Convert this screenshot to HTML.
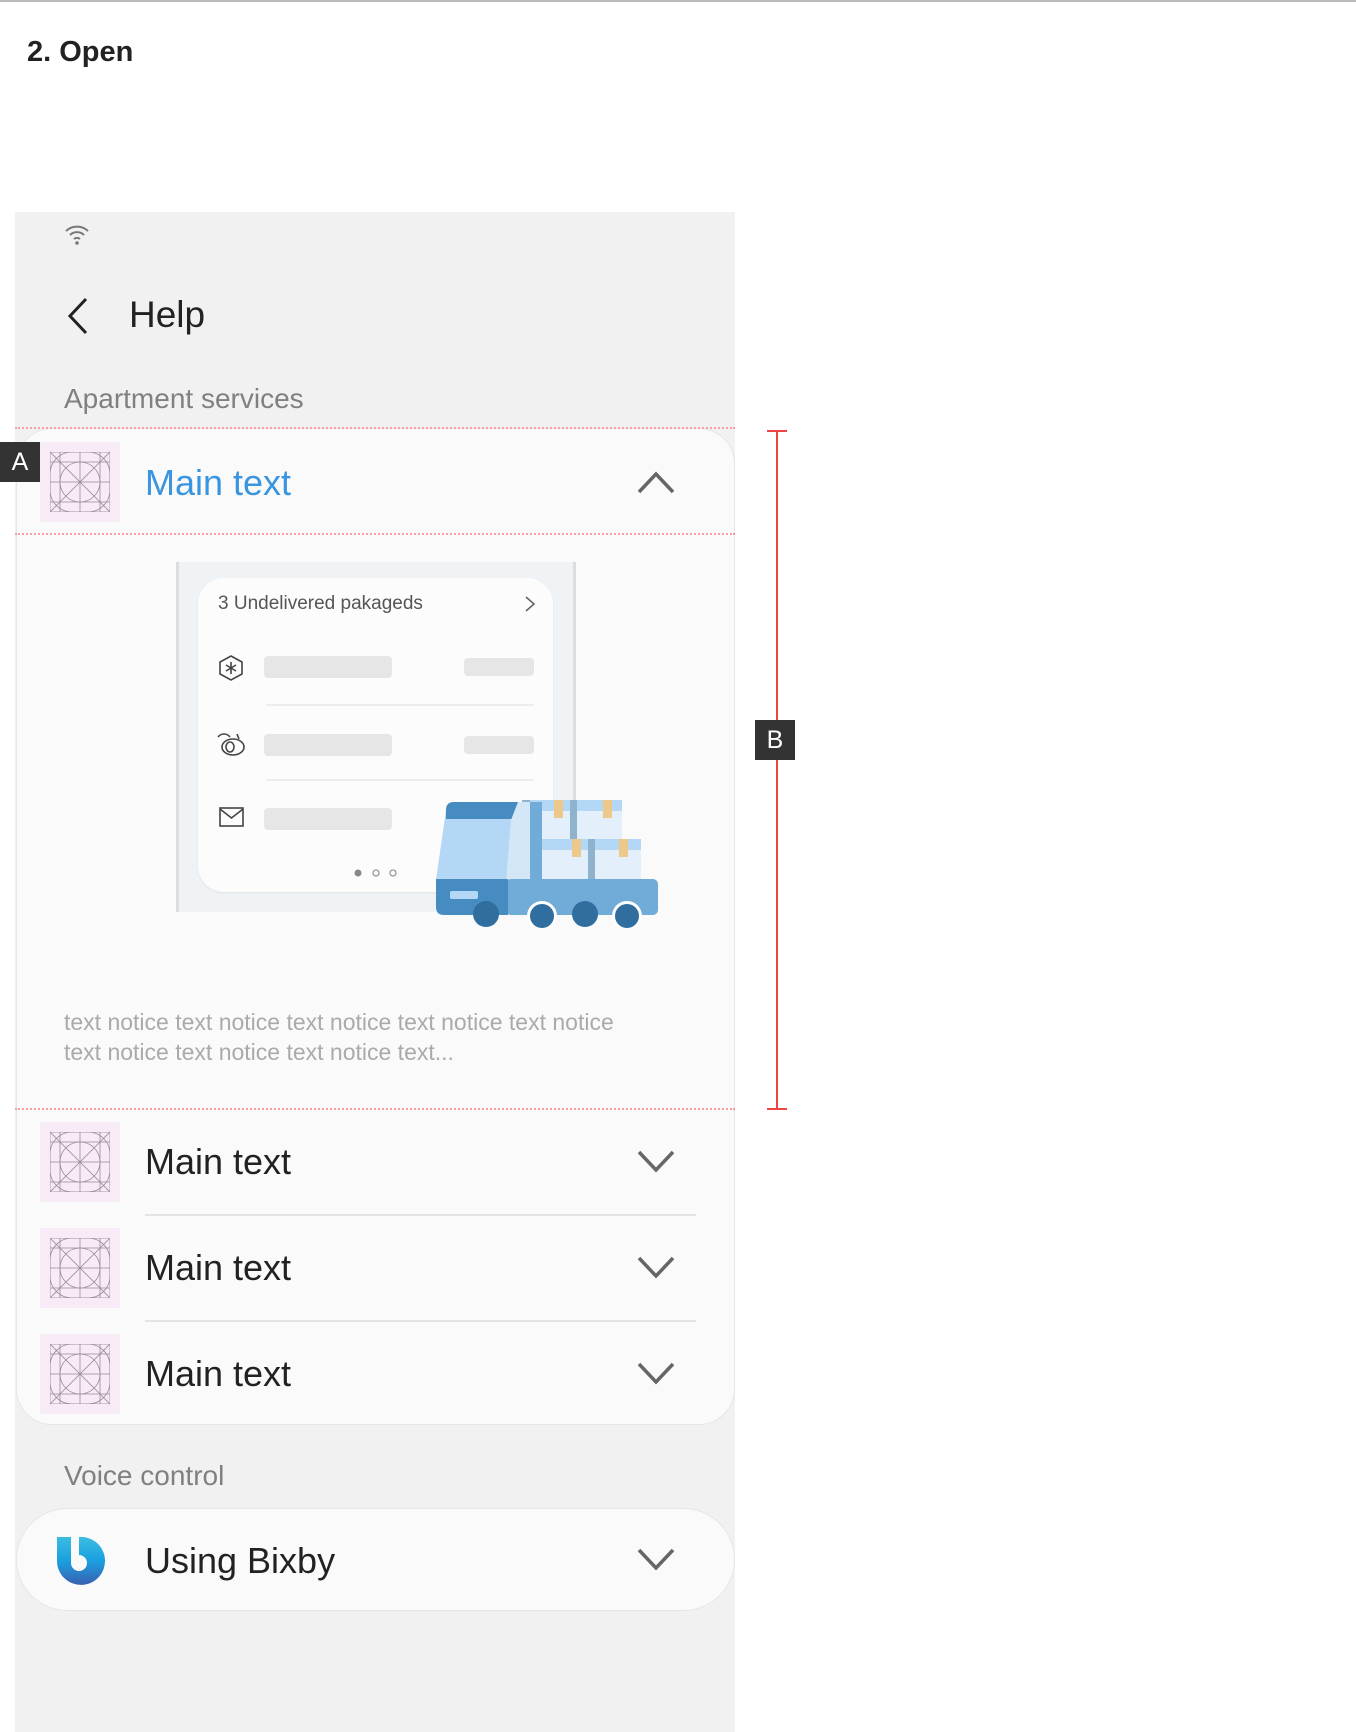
<!DOCTYPE html>
<html><head><meta charset="utf-8"><style>
*{margin:0;padding:0;box-sizing:border-box}
body{width:1356px;height:1732px;background:#fff;position:relative;overflow:hidden;font-family:"Liberation Sans",sans-serif}
.a{position:absolute}
.dot{position:absolute;left:15px;width:720px;border-top:2px dotted #f3a0a0}
.ic{position:absolute;left:40px;width:80px;height:80px;background:#f8ebf8}
.mt{position:absolute;left:145px;font-size:36px;color:#222}
.sep{position:absolute;left:145px;width:551px;height:2px;background:#e4e4e4}
.bar{position:absolute;background:#e6e6e6;border-radius:4px}
</style></head><body>
<div class="a" style="left:0;top:0;width:1356px;height:2px;background:#bbb"></div>
<div class="a" style="left:27px;top:36px;font-size:29px;color:#222;font-weight:bold">2. Open</div>
<div class="a" style="left:15px;top:212px;width:720px;height:1520px;background:#f1f1f1"></div>
<svg class="a" style="left:64px;top:224px" width="26" height="22" viewBox="0 0 26 22"><g fill="none" stroke="#777" stroke-width="2"><path d="M2 7a16 16 0 0 1 22 0"/><path d="M6 11a10 10 0 0 1 14 0"/><path d="M10 15a4.5 4.5 0 0 1 6 0"/></g><circle cx="13" cy="19" r="1.8" fill="#777"/></svg>
<svg class="a" style="left:64px;top:296px" width="28" height="40"><path d="M22 3L6 20l16 17" fill="none" stroke="#222" stroke-width="3"/></svg>
<div class="a" style="left:129px;top:294px;font-size:37px;color:#222">Help</div>
<div class="a" style="left:64px;top:383px;font-size:28px;color:#808080">Apartment services</div>

<div class="a" style="left:16px;top:428px;width:719px;height:997px;background:#fafafa;border:1px solid #e6e6e6;border-radius:36px"></div>
<div class="dot" style="top:427px"></div>
<div class="dot" style="top:533px"></div>
<div class="dot" style="top:1108px"></div>

<svg width="0" height="0" style="position:absolute"><defs><symbol id="g" viewBox="0 0 60 60"><g fill="none" stroke="#9a8a9c" stroke-width=".8"><rect x="0" y="0" width="60" height="60"/><path d="M0 0L60 60M60 0L0 60M30 0V60M0 30H60M10 0V60M50 0V60M0 10H60M0 50H60"/><circle cx="30" cy="30" r="20"/><rect x="0" y="0" width="60" height="60" rx="22"/></g></symbol></defs></svg>
<div class="ic" style="top:442px"><svg class="a" style="left:10px;top:10px" width="60" height="60"><use href="#g"/></svg></div>
<div class="a" style="left:0;top:442px;width:40px;height:40px;background:#333;color:#fff;font-size:25px;text-align:center;line-height:40px">A</div>
<div class="mt" style="top:462px;color:#3a95e0">Main text</div>
<svg class="a" style="left:636px;top:468px" width="40" height="28"><path d="M3 24L20 6l17 18" fill="none" stroke="#666" stroke-width="3.5"/></svg>

<div class="a" style="left:176px;top:562px;width:400px;height:350px;background:#f0f3f6;border-left:3px solid #ddd;border-right:3px solid #ddd"></div>
<div class="a" style="left:198px;top:578px;width:355px;height:314px;background:#fcfcfc;border-radius:26px;box-shadow:0 1px 2px #e2e2e2"></div>
<div class="a" style="left:218px;top:593px;font-size:19px;color:#555">3 Undelivered pakageds</div>
<svg class="a" style="left:523px;top:595px" width="14" height="18"><path d="M3 2l8 7-8 7" fill="none" stroke="#666" stroke-width="1.6"/></svg>
<svg class="a" style="left:218px;top:654px" width="26" height="28"><path d="M13 2l11 6v12l-11 6-11-6V8z" fill="none" stroke="#444" stroke-width="1.6"/><path d="M13 8v12M8 11l10 6M18 11l-10 6" stroke="#444" stroke-width="1.6"/></svg>
<div class="bar" style="left:264px;top:656px;width:128px;height:22px"></div>
<div class="bar" style="left:464px;top:658px;width:70px;height:18px"></div>
<div class="a" style="left:266px;top:704px;width:268px;height:2px;background:#ececec"></div>
<svg class="a" style="left:216px;top:731px" width="30" height="26"><g fill="none" stroke="#444" stroke-width="1.6"><ellipse cx="17" cy="16" rx="11" ry="8"/><ellipse cx="14" cy="16" rx="4" ry="5"/><path d="M2 6c3-4 9-4 12 0M21 3l2 5"/></g></svg>
<div class="bar" style="left:264px;top:734px;width:128px;height:22px"></div>
<div class="bar" style="left:464px;top:736px;width:70px;height:18px"></div>
<div class="a" style="left:266px;top:779px;width:268px;height:2px;background:#ececec"></div>
<svg class="a" style="left:218px;top:806px" width="28" height="24"><rect x="2" y="2" width="23" height="18" fill="none" stroke="#444" stroke-width="1.6"/><path d="M2 3l11.5 9L25 3" fill="none" stroke="#444" stroke-width="1.6"/></svg>
<div class="bar" style="left:264px;top:808px;width:128px;height:22px"></div>
<svg class="a" style="left:350px;top:866px" width="52" height="14"><circle cx="8" cy="7" r="3.5" fill="#888"/><circle cx="26" cy="7" r="3" fill="none" stroke="#999" stroke-width="1.3"/><circle cx="43" cy="7" r="3" fill="none" stroke="#999" stroke-width="1.3"/></svg>
<svg class="a" style="left:436px;top:800px" width="222" height="128" viewBox="0 0 222 128">
<rect x="86" y="0" width="100" height="40" fill="#e3effa"/><rect x="86" y="0" width="100" height="11" fill="#b3d7f4"/>
<rect x="86" y="0" width="8" height="80" fill="#8fb3cd"/><rect x="134" y="0" width="7" height="40" fill="#8fb3cd"/>
<rect x="118" y="0" width="9" height="18" fill="#ecc98b"/><rect x="167" y="0" width="9" height="18" fill="#ecc98b"/>
<rect x="105" y="39" width="100" height="41" fill="#e3effa"/><rect x="105" y="39" width="100" height="11" fill="#b3d7f4"/>
<rect x="152" y="39" width="7" height="41" fill="#8fb3cd"/>
<rect x="136" y="39" width="9" height="18" fill="#ecc98b"/><rect x="183" y="39" width="9" height="18" fill="#ecc98b"/>
<path d="M10 10q0-8 8-8h88v78H0z" fill="#b3d7f4"/><path d="M10 10q0-8 8-8h70v17H10z" fill="#478cc0"/>
<path d="M82 2h20v80H70l5-62z" fill="#d4e7f7"/><rect x="94" y="2" width="12" height="78" fill="#71acd8"/>
<rect x="70" y="79" width="152" height="36" rx="5" fill="#71acd8"/><path d="M0 79h72v36H8q-8 0-8-8z" fill="#478cc0"/>
<rect x="14" y="91" width="28" height="8" rx="2" fill="#b3d7f4"/>
<circle cx="50" cy="114" r="13" fill="#2f6e9e"/><circle cx="106" cy="116" r="15" fill="#fff"/><circle cx="106" cy="116" r="12" fill="#2f6e9e"/>
<circle cx="149" cy="114" r="13" fill="#2f6e9e"/><circle cx="191" cy="116" r="15" fill="#fff"/><circle cx="191" cy="116" r="12" fill="#2f6e9e"/>
</svg>
<div class="a" style="left:64px;top:1007px;width:590px;font-size:23px;line-height:30px;color:#aaa">text notice text notice text notice text notice text notice text notice text notice text notice text...</div>

<div class="a" style="left:776px;top:430px;width:2px;height:680px;background:#e44"></div>
<div class="a" style="left:767px;top:430px;width:20px;height:2px;background:#e44"></div>
<div class="a" style="left:767px;top:1108px;width:20px;height:2px;background:#e44"></div>
<div class="a" style="left:755px;top:720px;width:40px;height:40px;background:#333;color:#fff;font-size:25px;text-align:center;line-height:40px">B</div>

<div class="ic" style="top:1122px"><svg class="a" style="left:10px;top:10px" width="60" height="60"><use href="#g"/></svg></div>
<div class="mt" style="top:1141px">Main text</div>
<svg class="a" style="left:636px;top:1148px" width="40" height="28"><path d="M3 4l17 18L37 4" fill="none" stroke="#666" stroke-width="3.5"/></svg>
<div class="sep" style="top:1214px"></div>
<div class="ic" style="top:1228px"><svg class="a" style="left:10px;top:10px" width="60" height="60"><use href="#g"/></svg></div>
<div class="mt" style="top:1247px">Main text</div>
<svg class="a" style="left:636px;top:1254px" width="40" height="28"><path d="M3 4l17 18L37 4" fill="none" stroke="#666" stroke-width="3.5"/></svg>
<div class="sep" style="top:1320px"></div>
<div class="ic" style="top:1334px"><svg class="a" style="left:10px;top:10px" width="60" height="60"><use href="#g"/></svg></div>
<div class="mt" style="top:1353px">Main text</div>
<svg class="a" style="left:636px;top:1360px" width="40" height="28"><path d="M3 4l17 18L37 4" fill="none" stroke="#666" stroke-width="3.5"/></svg>

<div class="a" style="left:64px;top:1460px;font-size:28px;color:#808080">Voice control</div>
<div class="a" style="left:16px;top:1508px;width:719px;height:103px;background:#fafafa;border:1px solid #e6e6e6;border-radius:52px"></div>
<svg class="a" style="left:55px;top:1535px" width="50" height="50" viewBox="0 0 50 50"><defs><linearGradient id="bx" x1="0" y1="0" x2="0" y2="1"><stop offset="0" stop-color="#3bbde0"/><stop offset=".5" stop-color="#1a9fe0"/><stop offset="1" stop-color="#3a5fb0"/></linearGradient></defs><path d="M2 2h14v26a8 8 0 1 0 8-8V2a24 24 0 1 1-22 24z" fill="url(#bx)"/></svg>
<div class="mt" style="top:1540px">Using Bixby</div>
<svg class="a" style="left:636px;top:1546px" width="40" height="28"><path d="M3 4l17 18L37 4" fill="none" stroke="#666" stroke-width="3.5"/></svg>
</body></html>
